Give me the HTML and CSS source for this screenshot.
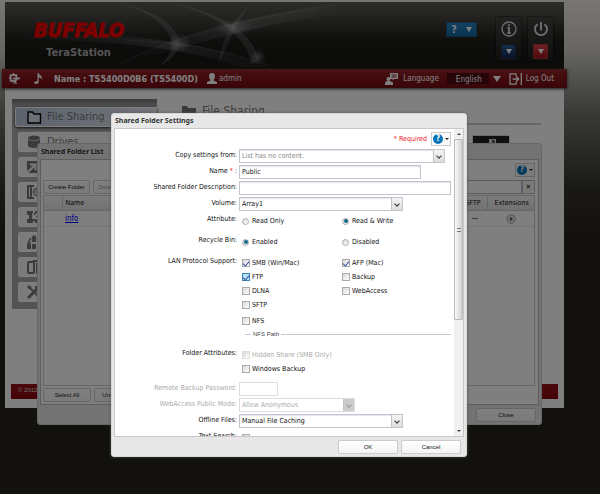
FILE: index.html
```html
<!DOCTYPE html>
<html lang="en">
<head>
<meta charset="utf-8">
<title>TeraStation - File Sharing</title>
<link rel="stylesheet" href="styles.css">
</head>
<body>
<div class="desktop">
  <div class="page">
    <header class="banner">
      <svg class="banner-art" viewBox="0 0 560 67" preserveAspectRatio="xMinYMin slice" aria-hidden="true">
        <defs>
          <radialGradient id="glow"><stop offset="0" stop-color="#fff" stop-opacity=".3"/><stop offset="1" stop-color="#fff" stop-opacity="0"/></radialGradient>
          <linearGradient id="beam" x1="0" x2="1"><stop offset="0" stop-color="#fff" stop-opacity="0"/><stop offset=".6" stop-color="#fff" stop-opacity=".13"/><stop offset="1" stop-color="#fff" stop-opacity=".02"/></linearGradient>
        </defs>
        <path d="M115 62C190 25 250 14 330 2V12C270 20 215 35 115 62Z" fill="url(#beam)"/>
        <path d="M0 38C80 28 180 32 262 64L240 66C180 45 90 36 0 38Z" fill="url(#beam)"/>
        <path d="M120 3Q170 15 174 41Q172 54 156 63Q168 50 167 40Q160 15 120 3Z" fill="#fff" opacity=".13"/>
        <path d="M175 3Q245 20 253 58L246 63Q242 25 175 3Z" fill="#fff" opacity=".13"/>
        <path d="M243 5Q218 25 214 62Q222 40 243 5Z" fill="#fff" opacity=".12"/>
        <g fill="none" stroke="#fff" stroke-opacity=".1" stroke-width="1">
          <path d="M120 3Q170 15 174 41Q172 54 156 63"/><path d="M175 3Q245 20 253 58"/><path d="M115 62C160 38 230 18 330 3"/><path d="M120 38Q200 40 262 63"/>
        </g>
        <ellipse cx="174" cy="41" rx="12" ry="10" fill="url(#glow)"/>
        <ellipse cx="229" cy="25" rx="20" ry="8" fill="url(#glow)"/>
        <ellipse cx="253" cy="55" rx="8" ry="8" fill="url(#glow)"/>
      </svg>
      <div class="brand">
        <div class="logo">BUFFALO</div>
        <div class="product">TeraStation</div>
      </div>
      <div class="banner-tools">
        <button class="help-menu" aria-label="Help"><b>?</b><i class="tri"></i></button>
        <div class="tool">
          <svg width="16" height="16" viewBox="0 0 16 16" fill="none" stroke="#ddd"><circle cx="8" cy="8" r="7" stroke-width="1.3"/><path d="M8 3.2v2M6.5 7H8v5M6.3 12.2h3.4" stroke-width="1.8"/></svg>
          <button class="drop blue" aria-label="Information"><i class="tri"></i></button>
        </div>
        <div class="tool">
          <svg width="16" height="16" viewBox="0 0 16 16" fill="none" stroke="#ddd" stroke-width="1.9"><path d="M8 1v8.5M4.6 3.2a6 6 0 1 0 6.8 0"/></svg>
          <button class="drop red" aria-label="Power"><i class="tri"></i></button>
        </div>
      </div>
    </header>

    <div class="bar">
      <svg class="bar-icon" width="12" height="11" viewBox="0 0 12 11" fill="none" stroke="#fff"><circle cx="5.500" cy="5" r="3.200" stroke-width="1.800"/><path d="M5.500 0v1.500M1 5h1M1.800 1.500l1 1M9.200 1.500l-1 1M1.800 8.500l1-1" stroke-width="1.500"/><path d="M4.500 5.500h7.500" stroke-width="1.600"/><path d="M7.500 5v5.500M5 10h4" stroke-width="1.200"/></svg>
      <svg class="bar-icon" width="9" height="11" viewBox="0 0 9 11"><path d="M3.500 0h1.200q.3 1.800 2 2.500 1.800 1 1 4-.7-2-3-2.300V9q0 1.800-2.500 2Q0 11 0 9.600 .5 8 3.500 8Z" fill="#fff"/></svg>
      <strong class="name">Name : TS5400D0B6 (TS5400D)</strong>
      <span class="user"><svg width="10" height="11" viewBox="0 0 10 11" fill="#fff"><path d="M5 0C7.300 0 8 1.300 8 3.300 8 5 7.300 6 6.700 6.500v1L10 9v2H0V9l3.300-1.500v-1C2.600 6 2 5 2 3.300 2 1.300 2.700 0 5 0Z"/></svg>admin</span>
      <svg class="lang-icon" width="13" height="12" viewBox="0 0 13 12" fill="#fff"><path d="M5 0h8v6H9L7.500 7.500V6H5Z"/><path d="M6.500 2h5M6.500 4h5" stroke="#8b1a1e"/><circle cx="3.500" cy="6" r="2"/><path d="M0 12V9.500L2 8h3l3 1.500V12Z"/></svg>
      <label class="lang" for="lang">Language</label>
      <select id="lang" class="lang-select"><option>English</option></select>
      <i class="tri lang-tri"></i>
      <a class="logout" href="#"><svg width="13" height="12" viewBox="0 0 13 12" fill="none" stroke="#fff" stroke-width="1.300"><path d="M7 3V.8H1v10.400h6V9M3.500 6h6M7 3.300L9.700 6 7 8.700M12.300 0v12"/></svg>Log Out</a>
    </div>

    <div class="content">
      <nav class="side">
        <a class="item active" href="#"><svg width="15" height="13" viewBox="0 0 15 13"><path d="M1 12V1h4.500l1.500 2h6.500v9Z" fill="#dbe3ee" stroke="#000" stroke-width="1.400"/></svg>File Sharing</a>
        <a class="item" href="#"><svg width="14" height="14" viewBox="0 0 14 14" fill="#777"><ellipse cx="7" cy="3" rx="6" ry="2.500"/><path d="M1 4.500q6 3 12 0V11.500q-6 3-12 0Z"/></svg>Drives</a>
        <a class="item" href="#" aria-label="Applications"><svg width="14" height="14" viewBox="0 0 14 14"><path d="M0 1h14v12H0Z" fill="#777"/><path d="M0 13L7 6M3 4.500h5.500V10" fill="none" stroke="#f6f6f6" stroke-width="2"/></svg></a>
        <a class="item" href="#" aria-label="Network"><svg width="14" height="14" viewBox="0 0 14 14" fill="none" stroke="#777"><path d="M7 1H1v12h6" stroke-width="2"/><path d="M4 1v12" stroke-width="2"/><circle cx="10" cy="7" r="3.500" stroke-width="1.300"/><circle cx="10" cy="7" r="1.200"/></svg></a>
        <a class="item" href="#" aria-label="Backup"><svg width="14" height="14" viewBox="0 0 14 14"><path d="M0 1h6v2h2V1h6v12H8v-2H6v2H0V9h2V5H0Z" fill="#777"/><path d="M13 1L7 7M6 3v5h5" fill="none" stroke="#f6f6f6" stroke-width="1.800"/></svg></a>
        <a class="item" href="#" aria-label="Cloud"><svg width="14" height="14" viewBox="0 0 14 14" fill="#777"><path d="M5 1.500L7 0l2 1.500V7H5ZM0 9h4v5H0ZM5 9h4v5H5ZM10 9h4v5h-4Z"/><path d="M4 3L1 8h3M10 3l3 5h-3" fill="none" stroke="#777" stroke-width="1.500"/></svg></a>
        <a class="item" href="#" aria-label="Devices"><svg width="14" height="14" viewBox="0 0 14 14" fill="none" stroke="#777"><rect x="1" y="2" width="6" height="11" rx="1" stroke-width="2"/><path d="M6 1h7v12H10V3" stroke-width="2"/></svg></a>
        <a class="item" href="#" aria-label="Management"><svg width="14" height="14" viewBox="0 0 14 14" fill="none" stroke="#777"><path d="M1 13L11 3" stroke-width="3"/><path d="M1 1l3 3" stroke-width="3"/><path d="M4 4l9 9" stroke-width="1.800"/><path d="M9 1v4h4" stroke-width="1.800"/></svg></a>
      </nav>
      <main class="main">
        <h1><svg width="15" height="11" viewBox="0 0 15 11"><path d="M0 0h5l1 2h8v9H0Z" fill="#777"/></svg>File Sharing</h1>
        <button class="open" aria-label="Open"><svg width="9" height="8" viewBox="0 0 9 8"><path d="M2 0h7v7H2Z" fill="#ddd"/><path d="M3.500 5.500L7 2M4.500 1.800H7.200V4.500" fill="none" stroke="#222"/></svg></button>
      </main>
    </div>
    <footer class="foot">© 2012</footer>
  </div>

  <section class="window list-window" aria-label="Shared Folder List">
    <h2>Shared Folder List</h2>
    <div class="list-body">
      <div class="help-row"><button class="help" aria-label="Help"><b>?</b><i class="caret"></i></button></div>
      <div class="toolbar">
        <button class="btn">Create Folder</button><button class="btn" disabled>Delete Folder</button>
        <input class="search" type="text" aria-label="Search"><button class="clear" aria-label="Clear">✕</button>
      </div>
      <div class="grid">
        <table>
          <thead><tr><th class="c-check"></th><th>Name</th><th class="c-sftp">SFTP</th><th class="c-ext">Extensions</th></tr></thead>
          <tbody><tr><td></td><td class="c-link"><a href="#">info</a></td><td class="mid"><i class="dash"></i></td><td class="mid"><svg width="10" height="10" viewBox="0 0 10 10"><circle cx="5" cy="5" r="4.300" fill="#e8e8e8" stroke="#aaa"/><path d="M4 2.800L7 5 4 7.200Z" fill="#555"/></svg></td></tr></tbody>
        </table>
      </div>
      <div class="toolbar bottom"><button class="btn wide">Select All</button><button class="btn wide">Unselect All</button></div>
    </div>
    <div class="actions"><button class="btn action">Close</button></div>
  </section>

  <div class="mask"></div>

  <section class="window modal" role="dialog" aria-label="Shared Folder Settings">
    <h2>Shared Folder Settings</h2>
    <div class="modal-body">
      <form class="form">
        <div class="help-row"><span class="required">* Required</span><button type="button" class="help" aria-label="Help"><b>?</b><i class="caret"></i></button></div>
        <div class="fields">
          <div class="row"><label for="copy">Copy settings from:</label><span class="combo w-copy"><select id="copy" class="empty"><option>List has no content.</option></select></span></div>
          <div class="row"><label for="name">Name <em>*</em> :</label><input id="name" class="w-name" type="text" value="Public"></div>
          <div class="row"><label for="desc">Shared Folder Description:</label><input id="desc" class="w-desc" type="text"></div>
          <div class="row"><label for="vol">Volume:</label><span class="combo w-volume"><select id="vol"><option>Array1</option></select></span></div>
        </div>
        <div class="groups">
          <div class="row"><span class="legend">Attribute:</span><div class="options">
            <label><input type="radio" name="attr">Read Only</label><label><input type="radio" name="attr" checked>Read &amp; Write</label></div></div>
          <div class="row"><span class="legend">Recycle Bin:</span><div class="options">
            <label><input type="radio" name="bin" checked>Enabled</label><label><input type="radio" name="bin">Disabled</label></div></div>
          <div class="row"><span class="legend">LAN Protocol Support:</span><div class="options">
            <label><input type="checkbox" checked>SMB (Win/Mac)</label><label><input type="checkbox" checked>AFP (Mac)</label>
            <label><input type="checkbox" class="hot" checked>FTP</label><label><input type="checkbox">Backup</label>
            <label><input type="checkbox">DLNA</label><label><input type="checkbox">WebAccess</label>
            <label class="solo"><input type="checkbox">SFTP</label>
            <label class="solo nfs"><input type="checkbox">NFS</label></div></div>
        </div>
        <div class="nfs-path"><span>NFS Path</span></div>
        <div class="row attrs"><span class="legend">Folder Attributes:</span><div class="options">
          <label class="off solo"><input type="checkbox" disabled>Hidden Share (SMB Only)</label>
          <label class="solo"><input type="checkbox">Windows Backup</label></div></div>
        <div class="fields">
          <div class="row off"><label for="pw">Remote Backup Password:</label><input id="pw" class="w-pass" type="text" disabled></div>
          <div class="row off"><label for="mode">WebAccess Public Mode:</label><span class="combo w-mode"><select id="mode" disabled><option>Allow Anonymous</option></select></span></div>
          <div class="row"><label for="offline">Offline Files:</label><span class="combo w-volume"><select id="offline"><option>Manual File Caching</option></select></span></div>
          <div class="row last"><span class="legend">Text Search:</span><div class="options"><label><input type="checkbox" aria-label="Text Search"></label></div></div>
        </div>
      </form>
      <div class="scroll" aria-hidden="true"><i class="up"></i><div class="thumb"><i></i></div><i class="down"></i></div>
    </div>
    <div class="actions"><button class="btn action">OK</button><button class="btn action">Cancel</button></div>
  </section>
</div>
</body>
</html>
```
FILE: styles.css
```css
* { box-sizing: border-box; }
html, body { margin: 0; }
body { font: 7px/14px "DejaVu Sans Condensed", "Noto Sans", sans-serif; color: #111; }
button, input, select { font: inherit; color: inherit; margin: 0; padding: 0; border-radius: 0; }
svg { display: block; flex: none; }
.desktop {
  position: relative; min-height: 100vh; padding: 2px 36px 0 5px; overflow: hidden;
  background: linear-gradient(#f0eeea 0, #cfcdc8 50px, #74736d 112px, #34322a 190px, #24221a 240px);
}
.mask { position: absolute; inset: 0; background: rgba(0, 0, 0, .5); }

/* page behind the windows */
.page { background: #fff; padding-bottom: 9px; }
.banner {
  position: relative; display: flex; justify-content: space-between; height: 67px; overflow: hidden;
  background: linear-gradient(#5a5955, #4a4945 12px, #1e1e1c 38px, #161614 55px, #1c1c1a);
}
.banner-art { position: absolute; inset: 0; width: 100%; height: 100%; }
.brand { position: relative; padding: 15px 0 0 29px; }
.logo { font: italic bold 20px/26px "DejaVu Sans Condensed", sans-serif; color: #f80000; -webkit-text-stroke: 1px #f80000; }
.product { padding: 4px 0 0 12px; font: bold 10px/12px "DejaVu Sans", sans-serif; color: #aaa; }
.banner-tools { position: relative; display: flex; align-items: flex-start; gap: 7px; padding: 15px 11px 0 0; }
.tri { width: 0; height: 0; border: 4px solid transparent; border-top: 6px solid #fff; border-bottom: 0; }
.help-menu {
  display: flex; align-items: center; justify-content: space-around; width: 31px; height: 15px; margin: 5px 12px 0 0;
  border: 1px solid #1e5478; background: linear-gradient(#2585c0, #1268a0); color: #fff; font-size: 10px;
}
.help-menu .tri, .drop .tri { border-width: 5px 3px 0; }
.tool {
  display: flex; flex-direction: column; align-items: center; gap: 7px; width: 25px; height: 44px; padding-top: 4px;
  background: linear-gradient(#42423e, #1c1c1a); box-shadow: 0 0 2px #000;
}
.drop { display: grid; place-items: center; width: 15px; height: 15px; border: 1px solid #222c44; }
.blue { background: linear-gradient(#2a5890, #10264e); }
.red { background: linear-gradient(#d84048, #9c1420); border-color: #a83038; }

.bar {
  position: relative; display: flex; align-items: center; height: 19px; margin: 0 -3px; padding: 0 13px 0 6px;
  background: linear-gradient(#94302f, #8c1c20 4px, #7a0c14 16px, #6a1014); box-shadow: 0 1px 3px #333;
  color: #fff; font-size: 8px;
}
.bar-icon + .bar-icon { margin-left: 14px; }
.name { margin-left: 11px; font-size: 9px; }
.user { display: flex; align-items: center; gap: 2px; margin-left: 9px; }
.lang-icon { margin-left: auto; }
.lang { margin: 0 8px 0 5px; }
.lang-select { width: 42px; height: 11px; border: 0; background: #4a0a10; appearance: none; padding-left: 9px; }
.lang-tri { margin: 0 8px 0 4px; border-width: 6px 4px 0; }
.logout { display: flex; align-items: center; gap: 4px; color: inherit; text-decoration: none; }

.content { display: flex; height: 296px; padding: 11px 0 0 7px; }
.side {
  display: flex; flex-direction: column; gap: 5px; width: 145px; height: 210px; padding: 8px 0 0 6px;
  background: linear-gradient(#777, #b0b0b0 10px, #a6a6a6);
}
.item {
  display: flex; align-items: center; gap: 6px; height: 20px; padding-left: 8px; border-radius: 3px 0 0 3px;
  background: #f6f6f6; border: 1px solid #fff; border-right: 0; color: #777; font-size: 11px; text-decoration: none; flex: none;
}
.active { margin-left: -3px; padding-left: 11px; gap: 5px; background: linear-gradient(90deg, #b9c6dc, #e4e9f0); box-shadow: 0 1px 3px #222; }
.main { flex: 1; padding: 3px 23px 0 25px; }
h1 { display: flex; align-items: center; gap: 5px; height: 23px; margin: 0; padding-bottom: 3px; border-bottom: 2px solid #d0d0d0; color: #777; font: 12px/18px "DejaVu Sans Condensed", sans-serif; }
.open { display: flex; justify-content: center; width: 38px; height: 16px; margin: 10px 31px 0 auto; padding-top: 3px; border: 1px solid #ddd; background: #222; }
.foot { height: 15px; margin: 0 6px; padding-left: 7px; background: linear-gradient(#96121a, #86060c); color: #ddd; font: 6px/13px "Liberation Sans", sans-serif; }

/* windows */
.window { position: absolute; border: 1px solid #ccc; border-radius: 3px; background: #e7e7e7; }
h2 { margin: 0; padding-left: 1px; font: bold 7px/15px "Noto Sans", sans-serif; color: #333; }
.list-window { left: 37px; right: 58px; top: 143px; padding: 0 2px; }
.list-body { padding: 3px 3px 1px 2px; border: 1px solid #bbb; background: #fff; }
.help-row { display: flex; justify-content: flex-end; align-items: center; gap: 4px; height: 14px; }
.help { display: flex; align-items: center; justify-content: center; gap: 2px; width: 20px; height: 14px; border: 1px solid #ccc; background: #fafafa; }
.help b { width: 10px; height: 10px; border-radius: 50%; background: #0674b8; color: #fff; font-size: 8px; line-height: 10px; text-align: center; }
.caret { border: 2px solid transparent; border-top-color: #222; border-bottom: 0; }
.btn {
  height: 14px; padding: 0 3px; border: 1px solid #ccc; border-radius: 2px; background: linear-gradient(#fff, #f4f4f4);
  font: 6px/10px "Liberation Sans", sans-serif; color: #222; white-space: nowrap;
}
.btn:disabled { color: #999; }
.toolbar { display: flex; gap: 3px; margin: 3px 0 1px; }
.toolbar > .btn { min-width: 47px; }
.search { width: 136px; height: 14px; margin-left: auto; border: 1px solid #b5b8c8; }
.clear { width: 13px; height: 14px; margin-left: -3px; border: 1px solid #bbb; background: #f4f4f4; line-height: 10px; }
.grid { height: 191px; border: 1px solid #ccc; }
table { width: 100%; border-collapse: collapse; table-layout: fixed; }
th { height: 14px; padding: 0 0 0 3px; border-right: 1px solid #ccc; border-bottom: 1px solid #ccc; background: linear-gradient(#f8f8f8, #e4e4e4); font-weight: normal; text-align: left; }
td { height: 16px; padding: 0 3px; border-bottom: 1px solid #e8e8e8; }
th:last-child { border-right: 0; }
.c-check { width: 18px; }
.c-sftp { width: 25px; }
.c-ext { width: 47px; padding-left: 7px; }
.c-link { font-size: 8px; }
.c-link a { color: #00f; }
.mid svg, .dash { margin: auto; }
.dash { display: block; width: 6px; height: 1px; background: #777; }
.bottom { margin-top: 2px; }
.toolbar > .wide { min-width: 48px; }
.actions { display: flex; justify-content: flex-end; gap: 3px; padding: 3px 3px 2px 0; }
.action { width: 60px; }

/* settings window */
.modal { left: 111px; right: 133px; top: 113px; padding: 0 2px; border-color: #d8d8d8; box-shadow: 0 0 3px #555; }
.modal h2 { line-height: 14px; }
.modal-body { display: flex; height: 309px; border: 1px solid #cdc5c9; background: #fff; overflow: hidden; }
.form { flex: 1; padding: 3px 3px 0 0; }
.required { color: #f01028; font-size: 7px; }
.fields { display: grid; gap: 2px; padding: 3px 0; }
.row { display: grid; grid-template-columns: 122px 1fr; column-gap: 2px; }
.row > label, .legend { text-align: right; line-height: 13px; }
.legend { line-height: 11px; }
em { color: #f01028; font-style: normal; }
.row > input, .combo { height: 14px; border: 1px solid #c0c4cf; background: #fff; box-shadow: inset 0 1px 1px #e4e4ea; }
.row > input { padding: 0 2px; }
.combo { position: relative; display: grid; }
.combo::before { content: ""; position: absolute; top: 0; right: 0; bottom: 0; width: 10px; border-left: 1px solid #c4c4c4; background: linear-gradient(#f4f4f4, #ddd); pointer-events: none; }
.combo::after { content: ""; position: absolute; right: 3px; top: 4px; width: 3px; height: 3px; border: solid #333; border-width: 0 1px 1px 0; rotate: 45deg; pointer-events: none; }
.combo select { appearance: none; border: 0; background: none; padding-left: 2px; line-height: 12px; opacity: 1; }
.empty { color: #888; }
.w-copy { width: 206px; }
.w-name { width: 182px; }
.w-desc { width: 212px; }
.w-volume { width: 164px; }
.w-mode { width: 116px; }
.w-pass { width: 39px; }
.groups { display: grid; gap: 7px; }
.options { display: grid; grid-template-columns: 100px 1fr; padding-left: 3px; }
.options label { display: flex; align-items: center; gap: 2px; height: 14px; }
.options .solo { grid-column: 1 / -1; }
.options .nfs { margin-top: 2px; }
.options input { display: grid; place-items: center; width: 8px; height: 8px; appearance: none; border: 1px solid #aaa; background: linear-gradient(135deg, #d8d8d8, #fff); }
.options input[type="radio"] { width: 7px; height: 7px; margin-right: 1px; border-radius: 50%; }
.options input[type="radio"]:checked::before { content: ""; width: 4px; height: 4px; border-radius: 50%; background: #17688f; }
.options input[type="checkbox"]:checked::before { content: ""; width: 3px; height: 5px; border: solid #3850a0; border-width: 0 1px 1px 0; rotate: 40deg; }
.options input.hot { border-color: #4080a8; background: #b8e4fa; }
.nfs-path { display: flex; align-items: center; gap: 2px; height: 12px; margin: 0 0 8px 130px; font: 6px/12px "Liberation Sans", sans-serif; color: #444; }
.nfs-path::before, .nfs-path::after { content: ""; width: 6px; height: 1px; background: #c4c8d4; }
.nfs-path::after { flex: 1; }
.attrs { margin-bottom: 3px; }
.off { color: #aaa; }
.off > input, .off .combo, .off input { border-color: #ddd; box-shadow: none; }
.off .combo::before { background: #ccc; }
.off .combo::after { border-color: #999; }
.last { margin-top: 1px; }
.scroll { display: flex; flex-direction: column; align-items: center; width: 10px; background: #f0f0f0; }
.up, .down { margin: 4px 0; border: 2px solid transparent; }
.up { border-bottom-color: #444; border-top: 0; }
.down { border-top-color: #444; border-bottom: 0; margin-top: auto; }
.thumb { display: grid; place-items: center; width: 9px; height: 181px; border: 1px solid #bbb; border-radius: 1px; background: linear-gradient(90deg, #f8f8f8, #d0d0d0); }
.thumb i { width: 4px; height: 4px; border: solid #777; border-width: 1px 0; }
```
